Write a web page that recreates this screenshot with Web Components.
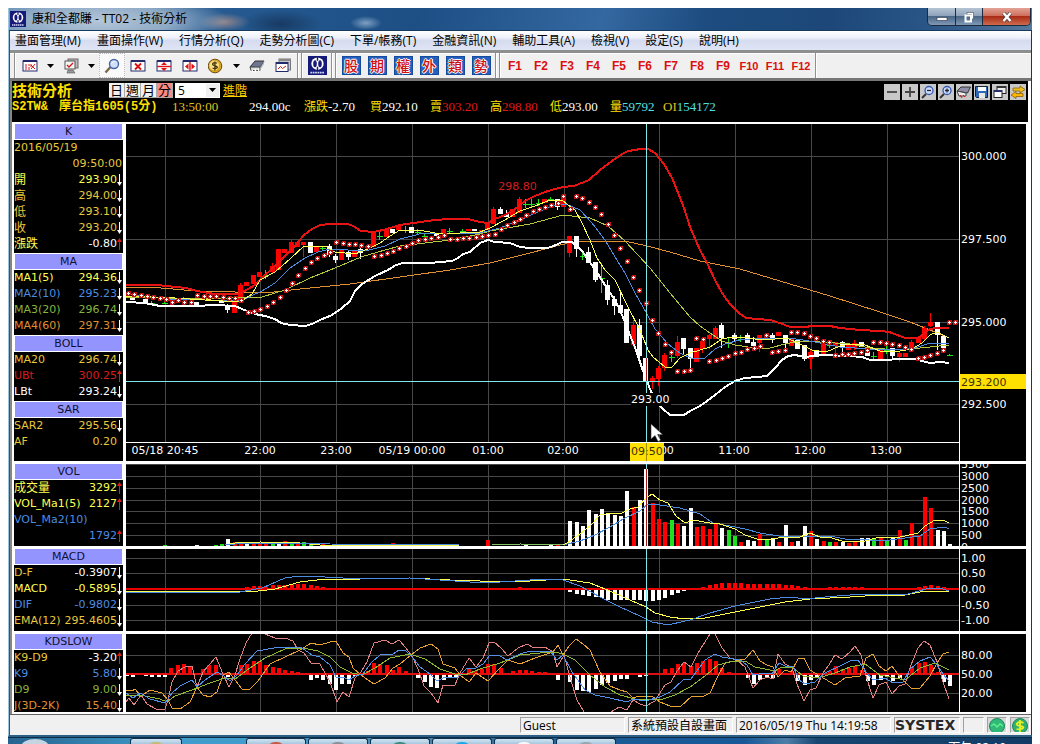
<!DOCTYPE html>
<html lang="zh-Hant">
<head>
<meta charset="utf-8">
<title>康和全都賺 - TT02 - 技術分析</title>
<style>
html,body{margin:0;padding:0;background:#fff;height:100%;overflow:hidden}
body{font-family:"Open Sans","Noto Sans CJK TC",sans-serif;font-size:12px;color:#000}
</style>
</head>
<body>
<trade-window></trade-window>
<task-bar></task-bar>
<script>
const mount=(el,html)=>{el.attachShadow({mode:'open'}).innerHTML=html;return el.shadowRoot};
const define=(name,html)=>customElements.define(name,class extends HTMLElement{
  constructor(){super();mount(this,typeof html==='function'?html(this):html)}
});
const LOGO=`<rect width="16" height="16" fill="#151a78"/><circle cx="8" cy="6.500" r="5.200" fill="#fff"/><ellipse cx="5.900" cy="6.500" rx="1.500" ry="3" fill="#151a78"/><ellipse cx="10.100" cy="6.500" rx="1.500" ry="3" fill="#151a78"/><path d="M8 0v4M8 9v4" stroke="#151a78" stroke-width="1.200"/><path d="M2 14h12" stroke="#cfd3f5" stroke-width="1.500" stroke-dasharray="1.500 .5"/>`;

/* ---------- title bar ---------- */
define('title-bar',`<style>
:host{display:flex;height:23px;box-sizing:border-box;align-items:center;padding-left:1px;
 background:radial-gradient(ellipse 130px 30px at 90px 13px,#b4c6d8 0,#9db5cddd 55%,#8ba6c200 100%),
 radial-gradient(ellipse 26px 9px at 215px 14px,#93868b 0,#93868b00 100%),
 radial-gradient(ellipse 40px 14px at 272px 16px,#183a63 0,#183a6300 100%),
 radial-gradient(ellipse 16px 7px at 357px 15px,#7fa0c2 0,#7fa0c200 100%),
 linear-gradient(100deg,#5a83ad 0,#25598f 22%,#1d4f85 40%,#3468a0 58%,#1d4c80 68%,#1c4778 80%,#2a5587 90%,#56799d 100%);
 border-bottom:1px solid #16395e}
svg{flex:none}
h1{font-size:12px;line-height:16px;font-weight:400;margin:0 0 0 6px;flex:1;white-space:nowrap}
.ctl{display:flex;align-self:flex-start;margin-right:1px;border:1px solid #1a2b40;border-top:0;border-radius:0 0 5px 5px;overflow:hidden;height:17px}
button{all:unset;width:27px;height:17px;display:flex;align-items:center;justify-content:center;background:linear-gradient(#b5c4d4,#8ea3ba 45%,#4a6786 50%,#7f99b5);border-right:1px solid #1a2b40}
button:nth-child(2){width:26px}
button:last-child{width:47px;border:0;background:linear-gradient(#e2a396,#cf6f5c 45%,#a92c16 50%,#cf6b4d)}
</style>
<svg width="16" height="16" viewBox="0 0 16 16">${LOGO}</svg><h1><slot></slot></h1>
<div class="ctl"><button aria-label="最小化"><svg width="12" height="12"><rect x="1" y="6.500" width="10" height="3" fill="#fff" stroke="#445" stroke-width=".7"/></svg></button>
<button aria-label="還原"><svg width="12" height="12"><path d="M4 1.500h6.500V8H8.500V3.500H4z" fill="#fff" stroke="#445" stroke-width=".6"/><path d="M2.500 4.500h5.500v6h-5.500z" fill="none" stroke="#fff" stroke-width="2"/></svg></button>
<button aria-label="關閉"><svg width="12" height="12"><path d="M2.500 2l7 8M9.500 2l-7 8" stroke="#444" stroke-width="3.600"/><path d="M2.500 2l7 8M9.500 2l-7 8" stroke="#fff" stroke-width="2.400"/></svg></button></div>`);

/* ---------- menu bar ---------- */
define('menu-bar',`<style>
:host{display:flex;gap:16px;height:19px;padding:0 6px 0 5px;background:linear-gradient(#fff 0,#eef1fa 35%,#d6dcef 50%,#dfe5f5 100%)}
button{all:unset;font-size:12px;line-height:16px;white-space:nowrap}
</style>`+['畫面管理(M)','畫面操作(W)','行情分析(Q)','走勢分析圖(C)','下單/帳務(T)','金融資訊(N)','輔助工具(A)','檢視(V)','設定(S)','說明(H)'].map(t=>`<button>${t}</button>`).join(''));

/* ---------- tool bar ---------- */
const win=(inner)=>`<rect x="1" y="3" width="14" height="10" fill="#fff" stroke="#222a6b"/><rect x="1" y="2" width="14" height="2" fill="#222a6b"/>${inner}`;
const ICON={
 grid:win('<path d="M4 6v6M7 6v2M7 9v3M9 7l4 4M13 6l-4 5M9 6v3" stroke="#d01818" fill="none"/>'),
 monitor:`<rect x="5" y="1" width="10" height="9" fill="#bbb" stroke="#666"/><rect x="2" y="3" width="10" height="8" fill="#f4f4f4" stroke="#555"/><path d="M4 7l2 2 4-4" stroke="#d01818" fill="none" stroke-width="1.300"/><path d="M5 12h5l2 3H4z" fill="#999" stroke="#555" stroke-width=".6"/>`,
 lens:`<path d="M1.500 14.500L6.500 9" stroke="#7a6a4a" stroke-width="2.400"/><circle cx="10" cy="6" r="4.500" fill="#cfe0f8" stroke="#4a62a8" stroke-width="1.400"/><path d="M7.500 5.500q1-2 3-2" stroke="#fff" fill="none"/>`,
 close:win('<path d="M5 5.500l6 6M11 5.500l-6 6" stroke="#e01010" stroke-width="1.800"/>'),
 vsplit:win('<path d="M1 8.500h14" stroke="#e01010" stroke-width="1.400"/><path d="M5 7h6L8 4zM5 10h6l-3 3z" fill="#e01010"/>'),
 hsplit:win('<path d="M8 4v9" stroke="#e01010" stroke-width="1.400"/><path d="M6.500 5.500v6L3 8.500zM9.500 5.500v6L13 8.500z" fill="#e01010"/>'),
 coin:`<circle cx="7" cy="8" r="6.800" fill="#d9a520" stroke="#6e4f10"/><circle cx="6.200" cy="7.500" r="4.800" fill="#f7e08a"/><path d="M9 5.300Q6.500 3.800 5 5.300T7 7.800 8.700 10 4.500 10M6.900 3.500v9" fill="none" stroke="#4a3508" stroke-width="1.300"/>`,
 printer:`<path d="M1 9l5-6h9l-4 7z" fill="#6e7691" stroke="#333"/><path d="M1 9h10v3.500H2z" fill="#ddd" stroke="#444"/><path d="M3 12l1 2.500M6 11l1 3.500M9 11l1 2" stroke="#fff" stroke-width="1.500"/><path d="M11 10l4-7v3l-4 6z" fill="#a8b0b8"/>`,
 cascade:`<rect x="4" y="1" width="11.500" height="11" fill="#c9c9c9" stroke="#777"/><rect x="4" y="1" width="12" height="2" fill="#888"/><rect x="1" y="4.500" width="12" height="9" fill="#fff" stroke="#222a6b"/><rect x="1" y="4" width="12" height="2" fill="#222a6b"/><path d="M3 11l2.500-2.500 2 2L11 8" stroke="#d01818" fill="none"/>`
};
define('tool-bar',`<style>
:host{display:flex;align-items:center;height:25px;background:#f0f0f0;border-top:3px solid #8e8e8e;border-bottom:3px solid #767676;box-sizing:content-box;padding-left:3px;box-shadow:inset 0 1px #fff}
button{all:unset;box-sizing:border-box;width:26px;height:25px;display:flex;align-items:center;justify-content:center;flex:none}
button.drop{width:15px}
button.on{background:#fafafa;outline:1px dotted #bbb;outline-offset:-1px}
.sep{width:1px;height:25px;background:#909090;border-right:1px solid #fff;margin:0 1px;flex:none}
.grp{display:flex}
.sq b{box-sizing:border-box;width:19px;height:19px;background:#2460c0;border:1px solid #164a9c;color:#d01010;font:500 14px/17px "Noto Sans CJK TC",sans-serif;display:flex;justify-content:center;text-shadow:1px 0 #fff,-1px 0 #fff,0 1px #fff,0 -1px #fff}
.fk button{color:#dc1010;font:700 12px/16px "Liberation Sans",sans-serif}
.fk button:nth-child(n+10){font-size:11px}
</style>
<div class="sep"></div><div class="grp">`+
['grid','-','monitor','-','lens*','close','vsplit','hsplit','coin','-','printer','cascade'].map(k=>k==='-'?
 `<button class="drop" aria-label="選單"><svg width="7" height="4"><path d="M0 0h7L3.500 4z"/></svg></button>`:
 `<button class="${k.endsWith('*')?'on':''}" aria-label="${k.replace('*','')}"><svg width="16" height="16" viewBox="0 0 16 16">${ICON[k.replace('*','')]}</svg></button>`).join('')+
`</div><div class="sep"></div><div class="sep"></div>
<button aria-label="CONCORD"><svg width="19" height="19" viewBox="0 0 16 16">${LOGO}</svg></button>
<div class="sep"></div><div class="sep"></div><div class="grp sq">`+[...'股期權外類勢'].map(c=>`<button><b>${c}</b></button>`).join('')+
`</div><div class="sep"></div><div class="sep"></div><div class="grp fk">`+Array.from({length:12},(_,i)=>`<button>F${i+1}</button>`).join('')+`</div><div class="sep"></div>`);

/* ---------- quote header ---------- */
const MINI=[
 '<path d="M3 8h10" stroke="#444" stroke-width="1.800"/>',
 '<path d="M3 8h10M8 3v10" stroke="#444" stroke-width="1.800"/>',
 '<path d="M2 14l4-4" stroke="#333" stroke-width="2"/><circle cx="9" cy="6.500" r="4" fill="#cfe0ff" stroke="#3458b0" stroke-width="1.300"/><path d="M7 6.500h4" stroke="#223" stroke-width="1.300"/>',
 '<path d="M2 14l4-4" stroke="#333" stroke-width="2"/><circle cx="9" cy="6.500" r="4" fill="#cfe0ff" stroke="#3458b0" stroke-width="1.300"/><path d="M7 6.500h4M9 4.500v4" stroke="#223" stroke-width="1.300"/>',
 '<path d="M1 7l4-4h9.500l-3 6z" fill="#8d8fa8" stroke="#333"/><path d="M1 7l9 2v3H3z" fill="#eee" stroke="#444"/><path d="M4 11l2 3M7 11l2 2" stroke="#d01010"/>',
 '<path d="M1.500 2.500h12v11h-11l-1-1z" fill="#2e67b5" stroke="#123"/><rect x="4" y="3" width="8" height="4" fill="#fff"/><rect x="5" y="9" width="6" height="5" fill="#e8e8e8"/>',
 '<rect x="5" y="2.500" width="9" height="7" fill="#eee" stroke="#222"/><rect x="5" y="2" width="9" height="2" fill="#333"/><rect x="2" y="6.500" width="8" height="7" fill="#fff" stroke="#222"/><rect x="2" y="6" width="8" height="2" fill="#24306e"/>',
 '<path d="M3 4h7V2l5 3.500L10 9V7H3z" fill="#f0c020" stroke="#7a5500" stroke-width=".7"/><path d="M13 9.500H6v-2L1 11l5 3.500v-2h7z" fill="#ffb400" stroke="#7a5500" stroke-width=".7"/>'];
define('quote-header',`<style>
:host{display:block;height:41px;background:#000;color:#ffe000}
.top{display:flex;height:16px;align-items:center;padding-top:1px}
h2{font:700 15px/16px "Noto Sans CJK TC",sans-serif;margin:0;width:97px}
.per{display:flex;width:66px}
.per button{all:unset;box-sizing:border-box;width:16px;height:15px;background:#f0f0f0;border-right:1px solid #aaa;border-bottom:1px solid #aaa;color:#000;font:13px/14px "Noto Sans CJK TC",sans-serif;text-align:center}
.per button.on{background:#f88a84}
select{appearance:none;border:0;border-radius:0;margin:0;width:45px;height:15px;padding:0 3px;background:#fff;color:#000;font:12px/15px "Open Sans",sans-serif;
 background-image:linear-gradient(#f0f0f0,#f0f0f0);background-size:13px 13px;background-position:right 1px top 1px;background-repeat:no-repeat}
.sel{display:grid;align-items:center}
.sel>*{grid-area:1/1}.sel svg{justify-self:end;margin-right:4px;z-index:1;pointer-events:none}
a{color:#ffd000;font-size:12px;line-height:15px;margin-left:3px}
.tools{margin-left:auto;display:flex;gap:2px;padding-right:2px;padding-top:3px}
.tools button{all:unset;width:16px;height:16px;background:#c8c8c8;display:flex}
.row{display:grid;grid-template-columns:160px 77px 55px 66px 60px 60px 60px 60px 53px auto;font:13px/16px "Liberation Serif","Noto Sans CJK TC",serif;padding-top:1px;white-space:nowrap;color:#fff}
.row i{font-style:normal;font-size:12px;color:#ffe000;font-family:"Noto Sans CJK TC",sans-serif;line-height:14px}
.row .n{font:700 12px/16px "Liberation Mono","Noto Sans CJK TC",monospace;color:#ffe000;display:flex;gap:11px}
.r{color:#e01818}.c{color:#50e0e0}.y{color:#e0c020}
.row>span{line-height:16px;height:16px}
</style>
<div class="top"><h2>技術分析</h2><div class="per"><button>日</button><button>週</button><button>月</button><button class="on">分</button></div>
<div class="sel"><select aria-label="分鐘"><option>5</option></select><svg width="7" height="4"><path d="M0 0h7L3.500 4z"/></svg></div><a href="#">進階</a>
<div class="tools">${MINI.map((m,i)=>`<button aria-label="工具 ${i+1}"><svg width="16" height="16">${m}</svg></button>`).join('')}</div></div>
<div class="row"><span class="n"><span>S2TW&amp;</span><span>摩台指1605(5分)</span></span><span class="y">13:50:00</span><span>294.00c</span><span><i>漲跌</i>-2.70</span><span><i>買</i>292.10</span><span class="r"><i>賣</i>303.20</span><span class="r"><i>高</i>298.80</span><span><i>低</i>293.00</span><span class="c"><i>量</i>59792</span><span class="c"><span class="y">OI</span>154172</span></div>`);

/* ---------- indicator panels ---------- */
const Y='#e8c83c',YB='#ffff50',B='#4c8ce0',G='#86b43c',O='#e09030',W='#ffffff',R='#d81c1c';
const PANELS={
 main:[['K',[['2016/05/19','',Y],['','09:50:00',Y,'',0],['開','293.90',YB,'d'],['高','294.00',Y,'d'],['低','293.10',Y,'d'],['收','293.20',Y,'d'],['漲跌','-0.80',[YB,W],'u']]],
  ['MA',[['MA1(5)','294.36',YB,'d'],['MA2(10)','295.23',B,'d'],['MA3(20)','296.74',G,'d'],['MA4(60)','297.31',O,'d']]],
  ['BOLL',[['MA20','296.74',Y,'d'],['UBt','300.25',R,'u'],['LBt','293.24',W,'d']]],
  ['SAR',[['SAR2','295.56',Y,'d'],['AF','0.20',Y,'n']]]],
 vol:[['VOL',[['成交量','3292',YB,'u'],['VOL_Ma1(5)','2127',YB,'u'],['VOL_Ma2(10)','',B],['','1792',B,'u']]]],
 macd:[['MACD',[['D-F','-0.3907',[Y,W],'d'],['MACD','-0.5895',YB,'d'],['DIF','-0.9802',B,'d'],['EMA(12)','295.4605',Y,'d']]]],
 kd:[['KDSLOW',[['K9-D9','-3.20',[Y,W],'u'],['K9','5.80',B,'d'],['D9','9.00',G,'d'],['J(3D-2K)','15.40',O,'d']]]]
};
const arrow=d=>d==='d'?'<svg width="5" height="12"><path d="M2.500 0v11" stroke="#fff"/><path d="M0 8h5L2.500 12z" fill="#fff"/></svg>':
 d==='u'?'<svg width="5" height="12"><path d="M2.500 1v11" stroke="#d81c1c"/><path d="M0 4h5L2.500 0z" fill="#d81c1c"/></svg>':d==='n'?'<svg width="5" height="12"></svg>':'';
define('indicator-panel',el=>`<style>
:host{display:block;background:#000;overflow:hidden;border-left:2px solid #fff;border-right:1px solid #fff;font:11px/16px "DejaVu Sans","Noto Sans CJK TC",sans-serif}
table{display:block;border:0;padding-bottom:1px}
caption{display:block;border:1px solid #fff;border-top:0;height:15px;line-height:15px;background:#9494ff;color:#101030;text-align:center}
table+table caption{border-top:1px solid #fff}
tbody{display:block}
tr{display:flex;height:16px;align-items:center;white-space:nowrap}
th{font-weight:400;padding:0;text-align:left}
th.cjk{font-size:12px}
td{padding:0 1px 0 0;margin-left:auto;display:flex;align-items:center}
</style>`+PANELS[el.dataset.kind].map(([h,rows])=>`<table><caption>${h}</caption><tbody>${rows.map(([l,v,c,a])=>{
 const [c1,c2]=Array.isArray(c)?c:[c,c];
 return `<tr>${l?`<th scope="row" class="${/[\u4e00-\u9fff]/.test(l)?'cjk':''}" style="color:${c1}">${l}</th>`:''}${v?`<td style="color:${c2}">${v}${arrow(a)}</td>`:''}</tr>`}).join('')}</tbody></table>`).join(''));

/* ---------- chart drawing ---------- */
const X0=126,WID=833,bx=i=>Math.round(127+i*6.333);
const VG=[6,21,33,45,57,69,84,96,108,120].map(bx);
const line=(pts,c,w=1)=>`<polyline points="${pts}" fill="none" stroke="${c}" stroke-width="${w}" vector-effect="non-scaling-stroke" ${w>1?'stroke-linejoin="round"':''}/>`;
const col={r:'#ff0000',w:'#ffffff',g:'#20e020'};
const hgrid=ys=>ys.map(y=>`<path d="M126 ${y}.5H959" stroke="#484848"/>`).join('');
const vgrid=(a,b)=>VG.map(x=>`<path d="M${x}.5 ${a}V${b}" stroke="#484848"/>`).join('');
const bars=(list,base)=>list.split(' ').map(t=>{const m=t.match(/^(\d+)([rwg])(\d+)$/);const x=bx(+m[1])-2,y=+m[3];
 return `<rect x="${x}" y="${Math.min(y,base)}" width="4" height="${Math.max(1,Math.abs(base-y))}" fill="${col[m[2]]}"/>`}).join('');

const CANDLES=`1w296,300 3w299,302 4g301,304 6g302,304 7r299,301 9g297,301 11w302,305 13y298,300 15w300,303 16w305,310,304,313 17r302,313 18r285,301,283,302 19r282,286 20r275,284 21r272,277 22g270,279 23r266,272,263,273 24r249,270 25r249,253 26r242,253,240,253 27r242,247 28r242,245,242,257 29w242,253 30r246,252 31g246,250 32w246,255,244,257 33w256,260,254,263 34r250,260 35w252,257,251,260 36r250,257 37w249,253,245,259 38r246,248 39r231,247 40g232,240 41r229,237 42w229,233 43r226,230 44g226,233 45w227,233 46g229,235 47g233,238 49w234,236 50r229,233 51g228,233 53g229,233 54r229,231 55w229,231 56r230,232 57r222,230 58r209,224,207,224 59w209,214,207,214 60w214,217,210,217 61r209,217 62r199,213,197,213 63g199,208 64g199,208 65g199,206 66r199,203 67g197,201 68w199,207,199,210 69r197,207 70r236,253,236,257 71w236,249,236,257 72g252,260 73w252,263,247,263 74w262,280,262,282 75g263,293 76w285,300,280,305 77w299,306,296,315 78w305,313,293,314 79w309,343 80r325,345,320,347 81w325,356,319,357 82w358,381 83r378,381,376,389 84r368,379,366,386 85r355,368,353,371 86g352,362 87r342,356,336,358 88w338,349,338,355 89w348,359,348,368 90r348,362 91r341,349,338,353 92r335,339,334,349 93r328,339,326,339 94w325,338,323,348 95g338,348 96w335,339,333,341 97g335,342 98w335,343,333,343 99w342,346,337,347 100r335,343,335,352 101g334,337 102w335,338,333,343 103r332,336 104w335,343,335,350 105r338,346 106w340,349 107w345,359,345,361 108r352,359,350,369 109w351,357 110r344,355 111g341,348 112r342,346,342,356 113w342,347,341,352 114r345,350 115r343,348,340,350 116w342,347 117w348,356 118g352,359 119r348,359 120g346,354 121w348,356,348,360 122r353,357,351,362 123r353,357 124r342,351,340,352 125r337,343 126r328,339,326,340 127r322,326,313,327 128w322,335,322,350 129w336,348,336,353 130g354,356`.split(' ').map(t=>{
 const m=t.match(/^(\d+)([rwgy])(.+)$/),x=bx(+m[1]),[a,b,h,l]=m[3].split(',').map(Number);
 if(m[2]==='g')return `<path d="M${x-.5} ${a}V${b}M${x-3} ${Math.round((a+b)/2)}.5H${x+3}" stroke="#20e020"/>`;
 const c=m[2]==='y'?'#ffff50':col[m[2]];
 return `<rect x="${x-3}" y="${a}" width="5" height="${b-a}" fill="${c}"/>`+(h?`<path d="M${x-.5} ${h}V${l}" stroke="${c}"/>`:'');
}).join('');

const SAR='128,293 134,294 141,295 147,296 153,297 160,298 166,299 172,302 178,300 184,302 191,302 197,295 204,296 210,296 216,296 223,297 229,298 235,298 241,300 248,312 254,311 260,309 267,306 273,302 280,297 286,290 292,283 298,275 305,268 311,262 317,258 324,255 330,252 336,242 343,243 349,244 355,244 361,245 368,246 374,256 381,255 387,253 393,251 399,248 406,246 412,243 418,240 425,239 431,238 438,237 444,235 450,239 457,239 463,238 469,238 476,237 482,236 488,235 495,234 501,229 507,225 514,222 520,219 526,215 533,211 539,209 545,207 551,205 558,203 563,196 570,209 576,196 582,198 589,202 595,207 601,214 608,224 614,235 620,248 627,261 633,277 639,290 646,303 652,320 658,333 665,344 671,352 677,371 684,371 690,370 696,338 703,339 709,361 716,360 722,358 728,356 735,353 741,352 747,349 754,348 760,346 766,335 772,352 778,351 785,350 791,332 797,332 804,333 810,336 816,338 823,341 829,342 835,355 842,354 848,354 854,353 861,352 867,350 873,342 880,342 886,343 892,344 899,345 905,347 911,349 918,358 924,357 930,355 937,353 943,350 949,322 955,322'.split(' ').map(p=>{const [x,y]=p.split(',').map(Number);
 return `<rect x="${x-2}" y="${y-2}" width="5" height="5" rx="2" fill="#c01414"/><path d="M${x-1} ${y}.5h3M${x}.5 ${y-1}v3" stroke="#fff"/>`}).join('');

const PLOTS={
 main:{y:124,h:318,body:()=>hgrid([156,239,322,404])+vgrid(124,442)+
  line('126,287 150,287 195,291 235,292 265,293 300,289 350,284 400,277 450,270 490,263 530,253 560,245 582,241 625,241 647,246 670,252 700,261 740,269 780,281 830,296 880,312 910,322 925,328 935,332 949,338',O)+
  CANDLES+
  line('126,302 145,303 160,306 195,306 215,305 235,306 242,309 255,314 265,316 275,319 281,323 290,325 305,326 312,324 320,320 332,315 342,308 350,301 355,291 362,284 375,276 388,270 396,265 403,263 430,263 452,261 458,258 463,254 470,252 480,243 488,240 495,242 510,243 520,247 530,248 548,248 556,245 562,242 572,242 582,251 592,265 600,277 608,290 615,300 620,310 628,330 636,350 642,368 650,389 656,402 663,409 670,415 684,415 690,411 700,406 707,401 715,395 725,387 735,381 745,378 757,377 767,376 775,368 782,360 788,356 795,355 805,357 820,355 850,356 862,357 870,360 915,359 922,361 930,363 940,362 949,363','#fff',2)+
  line('126,285 158,285 175,287 186,288 197,291 215,294 235,294 241,293 248,289 255,285 262,278 275,266 285,256 295,246 304,235 312,229 320,225 330,224 348,224 353,226 361,231 374,232 387,229 400,225 420,222 435,220 450,219 468,219 480,222 488,223 495,219 505,215 515,209 525,201 535,196 545,192 555,189 563,187 574,186 589,180 600,170 612,161 622,154 628,151 635,150 640,149 648,149 655,153 664,164 672,178 681,200 684,208 690,227 696,241 700,250 707,263 715,280 722,293 730,304 739,313 746,318 757,319 770,320 780,323 790,327 805,327 812,326 830,326 840,328 860,330 880,331 889,332 897,335 905,338 918,338 925,333 930,329 936,328 949,328','#e81414',2)+
  line('126,297 200,299 262,297 285,290 310,278 335,268 361,257 385,250 400,246 450,240 480,234 490,231 530,224 563,215 590,218 608,226 625,241 650,268 670,293 690,317 700,326 710,333 722,341 735,345 755,348 770,348 785,344 800,341 820,342 850,344 870,348 900,350 920,348 949,345','#b8c83c')+
  line('126,294 170,299 240,301 262,291 275,283 290,268 305,258 318,252 330,249 365,251 385,246 400,239 412,236 423,233 480,233 500,228 520,220 540,211 556,205 566,204 580,210 592,223 605,240 615,257 625,273 635,293 647,314 655,329 668,344 680,353 693,359 705,358 715,349 725,344 740,340 760,338 790,338 815,342 840,347 870,349 900,350 915,348 930,343 949,343',B)+
  line('126,296 175,298 205,300 240,302 252,294 260,280 275,272 290,259 304,246 325,246 335,252 355,254 368,249 380,243 390,236 400,230 418,230 430,232 440,234 460,233 480,232 490,228 505,220 520,211 535,206 550,200 563,201 575,210 582,223 590,240 597,258 605,270 615,280 628,307 640,330 648,350 653,357 665,367 672,367 680,358 690,353 700,350 710,347 722,339 732,337 745,337 760,340 775,339 787,338 800,344 812,350 826,352 840,346 850,344 865,345 880,351 900,351 912,349 922,343 930,335 937,332 949,338',YB)+SAR+
  '<path d="M126 381.500H959" stroke="#80e8e8"/>',
  over:`<text x="44.700%" y="66" fill="#d81c1c">298.80</text><svg x="60.620%" y="269" width="40" height="13"><rect width="40" height="13" fill="#000"/></svg><text x="60.620%" y="279" fill="#fff">293.00</text>`},
 vol:{y:464,h:82,body:()=>hgrid([464,476,488,500,511,523,535])+vgrid(464,546)+
  bars('6g545 11w545 14g545 15g544 16w539 17r542 18r542 19w544 20r544 21r544 22r543 23g544 24w544 25r541 26g544 27r544 28g542 29g544 31r544 41r544 42r543 47w544 57r540 63w544 67w544 68r544 70w521 71w522 72w526 73w510 74w514 75w509 76w514 77w515 78w516 79w491 80r507 81w500 82w469 83r503 84r519 85r522 86g520 87r524 88w526 89w508 90r527 91r526 92r529 93r523 94w528 95g530 96g536 97r542 98w540 99w541 100r534 101g540 102w538 103r542 104w525 105r542 106w541 107w526 108r531 109w539 110r541 111g542 112r542 113w542 114r543 115r541 116w538 117w538 118g538 119r538 120g540 121w537 122r530 123g540 124r523 125r535 126r497 127r508 128w530 129w531 130w544',546)+
  line('225,545 235,543 260,542 300,543 320,545 459,545',YB)+line('225,545 245,543 300,543 330,544 459,545',B)+line('492,545 520,544 563,545','#80c060')+
  line('563,545 580,541 595,535 610,527 625,518 640,511 648,504 660,505 680,508 700,514 713,523 730,526 745,529 760,533 785,537 810,536 830,536 845,539 870,540 890,540 905,538 920,536 930,529 945,527 949,529',B)+
  line('563,545 567,543 580,534 592,524 600,515 612,513 620,514 630,509 638,507 646,498 652,494 660,500 668,503 676,516 685,523 693,520 710,523 720,524 735,529 745,535 757,539 772,539 785,537 800,537 810,533 820,537 832,538 845,542 865,541 880,537 895,538 905,536 918,533 925,526 935,520 943,520 949,523',YB)},
 macd:{y:549,h:82,body:()=>hgrid([558,573,605,620])+vgrid(549,631)+
  bars('19r587 20r586 21r586 22r586 23r585 24r585 25r585 26r584 27r584 28r584 29r585 30r586 31r587 62r587 70w592 71w594 72w595 73w596 74w597 75w598 76w600 77w600 78w600 79w600 80w600 81w600 82w601 83w601 84w600 85w598 86w595 87w593 88w591 91r587 92r585 93r584 94r583 95r583 96r583 97r583 98r584 99r584 100r584 101r584 102r584 103r584 104r585 105r585 106r586 107r587 111r587 112r587 113r587 114r587 115r587 116r587 125r587 126r586 127r585 128r586 129r587',589)+
  '<path d="M126 589H959" stroke="#e80000" stroke-width="2"/>'+
  line('126,591 250,592 275,589 300,582 325,579 360,579 410,578 450,580 480,581 510,582 530,581 563,579 590,583 610,591 630,600 646,607 655,613 670,617 685,619 705,618 730,613 760,607 785,602 810,599 850,597 880,595 905,595 920,592 935,591 949,591',YB)+
  line('126,592 240,592 262,588 285,578 300,576 325,577 360,579 410,578 440,580 470,582 500,582 530,580 545,579 563,580 580,586 600,597 620,607 640,616 652,622 663,624 672,624 690,620 710,613 735,606 770,599 790,597 805,599 825,597 850,595 880,594 905,595 915,592 930,588 940,588 949,591',B)},
 kd:{y:634,h:78,body:()=>hgrid([655,693])+vgrid(634,712)+
  bars('0w676 1w677 3w676 4w677 5w677 6w677 7r668 8r665 9r664 10r666 12r669 13r665 14r665 16w677 18r665 19r664 20r661 21r661 22r665 23r667 24r668 25r670 26r671 27r672 29w680 30w678 31w680 32w684 33w690 34w684 35w684 36w676 38r671 39r663 40r664 41r665 42r670 43r667 44r671 46w678 47w682 48w687 49w688 50w680 51w677 52w677 54r668 55r671 56r669 57r664 58r664 59r668 61r671 62r670 63r670 64r671 65r672 66r672 68w680 70w682 71w690 72w691 73w692 74w689 75w685 76w683 77w681 78w679 79w679 81w677 82w676 85r669 86r668 87r664 88r663 89r666 90r663 91r661 92r659 93r661 94r668 95r672 98w678 99w684 100w680 101w677 102w678 103r669 105r671 106w681 107w685 108w680 109w678 111r671 112r666 113r669 114r668 115r666 116r670 117w681 118w685 119w680 120w677 121w681 122w678 124r667 125r663 126r662 127r665 128r672 129w682 130w686',674)+
  '<path d="M126 674H959" stroke="#e01010" stroke-width="2"/>'+
  line('126,702 129,698 134,705 141,695 147,704 156,709 165,709 168,700 172,682 178,671 185,667 192,666 197,687 203,672 209,665 216,657 223,674 229,687 235,675 240,659 246,643 252,633 258,626 265,634 275,638 285,638 293,641 298,650 304,653 311,663 320,664 330,682 337,702 343,692 349,697 355,678 361,672 367,662 374,643 385,640 392,644 399,640 406,648 412,656 418,669 424,686 431,693 438,703 443,685 455,685 460,673 469,658 476,667 483,658 489,643 494,642 501,648 508,656 518,648 527,644 534,648 545,647 553,652 557,667 564,655 572,684 577,700 584,712 598,718 611,712 619,707 627,710 633,700 640,704 646,706 655,701 665,685 671,682 677,671 684,662 691,667 698,653 710,634 714,632 722,648 730,658 738,661 745,667 753,688 760,680 767,677 773,679 778,654 785,664 792,668 797,684 804,701 810,690 816,688 823,673 829,665 835,655 842,659 850,652 855,646 861,655 866,676 873,698 879,685 886,682 892,694 899,686 905,684 911,665 918,648 924,641 930,645 937,662 943,682 949,699','#e08080')+
  line('126,690 132,691 135,689 141,696 150,690 162,693 168,700 172,708 180,709 190,702 197,687 203,695 210,697 217,692 223,675 229,672 235,680 242,689 249,690 258,681 270,664 285,657 300,650 311,643 320,645 330,642 336,641 343,653 349,657 353,668 361,675 368,680 374,684 385,678 393,668 400,664 411,655 420,648 431,644 438,649 443,664 455,668 460,675 469,682 476,673 488,681 500,668 508,660 520,664 535,658 553,652 558,645 563,655 569,646 576,639 583,644 590,650 600,672 610,686 620,690 627,692 633,698 640,696 652,696 660,702 670,706 680,707 692,696 702,697 710,693 718,676 725,663 735,661 745,659 753,650 760,661 767,665 773,667 778,677 785,670 791,672 798,659 804,658 810,670 820,676 835,685 845,678 860,676 866,658 873,654 879,666 886,671 892,666 900,677 911,688 920,688 930,676 937,663 943,654 949,652','#e8a030')+
  line('126,695 145,696 160,699 167,702 175,696 192,690 210,683 225,678 235,679 250,668 265,658 285,649 303,648 318,651 330,657 340,667 352,673 362,675 375,668 390,658 410,654 425,659 440,669 455,674 465,675 480,669 500,663 520,655 540,653 555,652 563,654 575,660 590,675 605,687 620,695 635,699 660,700 675,695 690,687 705,676 718,665 733,661 745,661 755,667 775,671 780,668 792,667 803,676 818,678 835,673 850,667 865,664 880,675 905,680 920,668 935,663 949,670','#90b830')+
  line('126,693 133,698 140,693 150,699 165,703 172,693 180,686 192,680 197,687 205,680 217,672 224,676 230,681 237,675 245,664 257,651 280,647 295,647 302,648 312,655 320,657 330,665 336,677 343,677 349,680 355,676 363,674 372,662 380,655 393,654 399,650 406,651 413,658 420,667 430,674 437,681 445,677 458,677 467,668 476,668 483,664 490,655 500,656 507,660 520,654 530,651 550,651 557,660 563,655 572,672 585,690 595,695 610,698 627,702 633,699 645,701 660,697 670,692 683,680 691,679 705,660 715,654 722,657 740,660 747,665 753,675 765,673 772,674 779,663 787,667 793,666 799,680 805,684 815,682 825,673 840,666 850,661 858,660 866,672 873,680 885,678 893,683 903,682 910,669 920,661 930,657 937,665 943,674 949,681','#5090e8')}
};
const pct=x=>((x-X0)/WID*100).toFixed(2)+'%';
const TIMES=[[165,'05/18 20:45'],[260,'22:00'],[336,'23:00'],[412,'05/19 00:00'],[488,'01:00'],[563,'02:00'],[658,'10:00'],[734,'11:00'],[810,'12:00'],[886,'13:00']];
define('chart-plot',el=>{
 const k=el.dataset.kind,p=PLOTS[k];
 const cur=`<path d="M646.500 ${p.y}V${p.y+p.h}" stroke="#80e8e8"/>`+(k==='vol'?'<path d="M646.500 469V546" stroke="#a01818"/>':k==='main'?'<path d="M646.500 358V381" stroke="#a01818"/>':'');
 return `<style>
:host{display:block;background:#000;border-left:1px solid #fff;margin-left:1px;overflow:hidden;min-width:0}
svg{display:block;overflow:hidden}
text{font:11px "DejaVu Sans",sans-serif}
.time{border-top:1px solid #fff}
</style><svg width="100%" height="${p.h}" role="img" aria-label="${k}"><svg width="100%" height="${p.h}" viewBox="${X0} ${p.y} ${WID} ${p.h}" preserveAspectRatio="none"><g shape-rendering="crispEdges">${p.body()}${cur}</g></svg>${p.over||''}${k==='main'?`<svg x="${pct(650)}" y="299" width="14" height="20"><path d="M1 1v15l4-3.500 3 6 2.500-1.500-3-5.500h5z" fill="#fff" stroke="#444" stroke-width=".5"/></svg>`:''}</svg>`+
 (k==='main'?`<svg class="time" width="100%" height="18">${TIMES.map(([x,t])=>`<text x="${pct(x)}" y="11" fill="#fff" text-anchor="middle">${t}</text>`).join('')}<svg x="${pct(630)}" width="34" height="18"><rect width="34" height="18" fill="#ffe000"/><text x="17" y="12" text-anchor="middle" fill="#403000">09:50</text><path d="M16.500 0v18" stroke="#a09000" stroke-width="1"/></svg></svg>`:'');
});

const AXES={
 main:[337,124,[[156,'300.000'],[239,'297.500'],[322,'295.000'],[404,'292.500']]],
 vol:[82,464,[[464,'3500'],[476,'3000'],[488,'2500'],[500,'2000'],[511,'1500'],[523,'1000'],[535,'500'],[547,'0']]],
 macd:[82,549,[[558,'1.00'],[573,'0.50'],[589,'0.00'],[605,'-0.50'],[620,'-1.00']]],
 kd:[78,634,[[655,'80.00'],[674,'50.00'],[693,'20.00']]]
};
define('price-axis',el=>{const [h,y0,l]=AXES[el.dataset.kind];
 return `<style>:host{display:block;background:#000;border-left:1px solid #fff;overflow:hidden}svg{display:block}text{font:11px "DejaVu Sans",sans-serif;fill:#fff}text.t{fill:#403000}</style>
<svg width="100%" height="${h}">${l.map(([y,t])=>`<text x="1" y="${y-y0+4}">${t}</text>`).join('')}${el.dataset.kind==='main'?'<rect y="250" width="100%" height="15" fill="#ffe000"/><text class="t" x="1" y="262">293.200</text>':''}</svg>`});

/* ---------- status bar ---------- */
define('status-bar',`<style>
:host{display:flex;height:18px;gap:3px;padding:2px 1px 0 0;background:#f0f0f0;border-top:1px solid #606060;justify-content:flex-end;font-size:12px}
span{box-sizing:border-box;height:16px;line-height:15px;border:1px solid #a0a0a0;border-right-color:#fff;border-bottom-color:#fff;padding-left:2px;white-space:nowrap;overflow:hidden}
.a{width:105px}.d{width:155px}.s{width:66px;padding-left:0;font:700 14px/14px "DejaVu Sans",sans-serif;color:#282828}
.e{width:21px}.i{width:20px;padding:0;background:#d8d8d8}
svg{display:block}
</style><span class="a">Guest</span><span class="a">系統預設自設畫面</span><span class="d">2016/05/19 Thu 14:19:58</span><span class="s">SYSTEX</span><span class="e"></span>
<span class="i"><svg width="18" height="16"><circle cx="9" cy="8" r="7.500" fill="#30b878" stroke="#1c8858"/><path d="M3 8l3-2 3 3 3-3 3 2" fill="none" stroke="#60f090" stroke-width="1.500"/></svg></span>
<span class="i"><svg width="18" height="16"><circle cx="9" cy="8" r="7.500" fill="#30b070" stroke="#1c8858"/><path d="M12.500 5Q9 3 6.500 5T9 8 11.500 10.500 5.500 11M9 2v12" fill="none" stroke="#e8f020" stroke-width="1.800"/></svg></span>`);

/* ---------- window ---------- */
define('trade-window',`<style>
:host{display:block;margin:8px 8px 0;border-left:1px solid #9cc4dc;border-bottom:2px solid #2c5f85}
.in{border-left:1px solid #36536c;border-right:1px solid #16395e}
.body{border-left:2px solid #868686;background:#fff;padding-right:3px}
.charts{display:grid;grid-template-columns:112px minmax(0,1fr) 67px;grid-template-rows:337px 82px 82px 78px;row-gap:3px;background:#fff;padding:2px 2px 2px 0}
</style>
<title-bar>康和全都賺 - TT02 - 技術分析</title-bar>
<div class="in"><menu-bar></menu-bar><tool-bar></tool-bar>
<div class="body"><quote-header></quote-header><div class="charts">${['main','vol','macd','kd'].map(k=>`<indicator-panel data-kind="${k}"></indicator-panel><chart-plot data-kind="${k}"></chart-plot><price-axis data-kind="${k}"></price-axis>`).join('')}</div></div>
<status-bar></status-bar></div>`);

/* ---------- task bar ---------- */
define('task-bar',`<style>
:host{display:flex;height:8px;margin:0 8px;overflow:hidden;border-top:1px solid #0c2c48;background:linear-gradient(90deg,#27648f 0,#3f9ccc 16%,#3f9ccc 24%,#4c86ac 40%,#1a5a94 58%,#195898 72%,#4d7ea8 76%,#174672 79%,#123c66 100%)}
.start{width:28px;height:16px;border-radius:50%;background:#c4d4e0;margin:1px 81px 0 13px;flex:none}
button{all:unset;width:58px;height:8px;border:1px solid #10304c;border-bottom:0;border-radius:3px 3px 0 0;background:linear-gradient(#d0e4f2,#8fb4d0);display:flex;justify-content:center;flex:none;margin-right:2px}
button.g{margin-right:64px;width:50px}
button.g~button{box-sizing:content-box}
time{margin-left:auto;color:#fff;font-size:12px;line-height:16px;padding-top:2px;margin-right:26px;white-space:nowrap}
i{display:block;width:18px;height:8px;margin-top:3px;border-radius:9px 9px 0 0}
</style><div class="start"></div><button class="g" aria-label="資料夾"><i style="background:#c8b878"></i></button>`+['#c85848','#8a9098','#3c8c80','#18a8e8','#f8f8f8','#98a8b0'].map((c,n)=>`<button aria-label="程式 ${n+1}"><i style="background:${c}"></i></button>`).join('')+`<time>下午 02:19</time>`);
</script>
</body>
</html>
